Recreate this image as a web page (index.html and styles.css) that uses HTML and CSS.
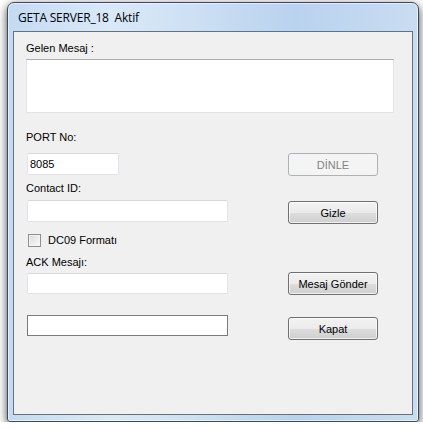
FILE: index.html
```html
<!DOCTYPE html>
<html lang="tr">
<head>
  <meta charset="UTF-8" />
  <title>GETA SERVER_18 Aktif</title>
  <link rel="stylesheet" href="styles.css">
</head>
<body>
  <div class="window">
    <div class="title">GETA SERVER_18&nbsp; Aktif</div>

    <div class="client">
      <div class="label">Gelen Mesaj :</div>
      <textarea class="memo"></textarea>

      <div class="label port-label">PORT No:</div>
      <div class="row row-port">
        <div class="left"><input class="box box-port" type="text" value="8085" /></div>
        <button class="btn" disabled>DİNLE</button>
      </div>

      <div class="label contact-label">Contact ID:</div>
      <div class="row row-contact">
        <div class="left"><input class="box box-wide" type="text" /></div>
        <button class="btn btn-gizle">Gizle</button>
      </div>

      <label class="check">
        <span class="tick"></span>
        <span>DC09 Formatı</span>
      </label>

      <div class="label ack-label">ACK Mesajı:</div>
      <div class="row row-ack">
        <div class="left"><input class="box box-wide box-ack" type="text" /></div>
        <button class="btn">Mesaj Gönder</button>
      </div>

      <div class="row row-close">
        <div class="left"><input class="box box-wide box-dark" type="text" /></div>
        <button class="btn btn-kapat">Kapat</button>
      </div>
    </div>
  </div>
</body>
</html>
```

FILE: styles.css
```css
body {
  margin: 0;
  background: #ffffff;
  font-family: "Liberation Sans", Arial, sans-serif;
  font-size: 11px;
  color: #000;
}

/* pencere cercevesi */
.window {
  box-sizing: border-box;
  width: 412px;
  height: 420px;
  margin: 2px 0 0 7px;
  padding: 28px 5px 6px 5px;
  border: 1px solid #3d4a59;
  border-radius: 7px 7px 3px 3px;
  background: linear-gradient(to right, #c4daf2 0%, #dae9f8 25%, #cde0f4 45%, #b9d2ee 70%, #c9ddf2 100%);
  box-shadow: inset 0 0 0 1px rgba(255, 255, 255, 0.55), 0 3px 10px rgba(0, 0, 0, 0.75);
  position: relative;
}

.title {
  position: absolute;
  left: 10px;
  top: 6px;
  font-family: "Open Sans", "Noto Sans", sans-serif;
  font-size: 12px;
  letter-spacing: -0.2px;
  color: #000;
}

.client {
  box-sizing: border-box;
  height: 384px;
  border: 1px solid #66717f;
  background: #f0f0f0;
  padding: 9px 0 0 12px;
}

.label {
  height: 14px;
  line-height: 14px;
}

.memo {
  display: block;
  box-sizing: border-box;
  width: 368px;
  height: 54px;
  margin: 4px 0 0 0;
  border: 1px solid #dfe3ea;
  border-top-color: #abadb3;
  background: #fff;
  resize: none;
  padding: 0;
}

.port-label {
  margin-top: 17px;
}

.row {
  display: flex;
  align-items: flex-start;
}

.left {
  width: 262px;
  padding-left: 1px;
  box-sizing: border-box;
}

.box {
  display: block;
  box-sizing: border-box;
  height: 22px;
  border: 1px solid #e2e3ea;
  border-top-color: #d5d8df;
  border-radius: 2px;
  background: #fff;
  font-family: "Liberation Sans", Arial, sans-serif;
  font-size: 11px;
  padding: 0 2px;
  margin: 0;
  outline: none;
}

.box-port {
  width: 92px;
}

.box-wide {
  width: 201px;
}

.box-ack {
  height: 21px;
  margin-top: 1px;
}

.box-dark {
  height: 21px;
  border: 1px solid #7a7a7a;
  border-radius: 0;
}

.btn {
  box-sizing: border-box;
  width: 90px;
  height: 23px;
  margin: 0;
  padding: 0;
  border: 1px solid #707070;
  border-radius: 3px;
  background: linear-gradient(to bottom, #f2f2f2 0%, #ebebeb 50%, #dddddd 51%, #cfcfcf 100%);
  box-shadow: inset 0 0 0 1px rgba(255, 255, 255, 0.7);
  font-family: "Liberation Sans", Arial, sans-serif;
  font-size: 11px;
  color: #000;
}

.btn:disabled {
  border-color: #adb2b5;
  background: #f4f4f4;
  box-shadow: none;
  color: #838383;
}

.row-port {
  margin-top: 9px;
}

.contact-label {
  margin-top: 5px;
}

.row-contact {
  margin-top: 5px;
}

.btn-gizle {
  margin-top: 1px;
}

.check {
  display: flex;
  align-items: center;
  gap: 7px;
  height: 14px;
  margin: 9px 0 0 2px;
}

.tick {
  box-sizing: border-box;
  width: 13px;
  height: 13px;
  border: 1px solid #8f8f8f;
  background: linear-gradient(135deg, #dcdcdc, #fafafa);
  box-shadow: inset 0 0 0 1px #f4f4f4;
}

.ack-label {
  margin-top: 8px;
}

.row-ack {
  margin-top: 3px;
}

.row-close {
  margin-top: 20px;
}

.btn-kapat {
  margin-top: 2px;
}
```
